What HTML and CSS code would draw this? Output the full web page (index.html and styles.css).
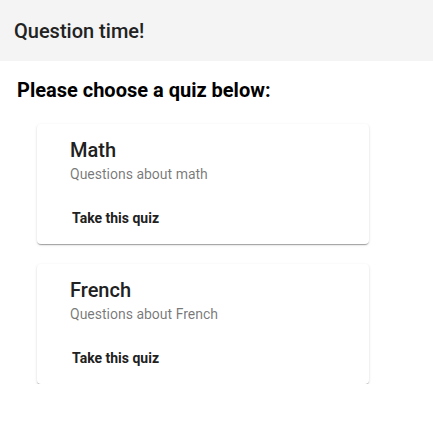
FILE: index.html
```html
<!DOCTYPE html>
<html>
<head>
<meta charset="utf-8">
<link rel="stylesheet" href="styles.css">
</head>
<body>
<header class="topbar">Question time!</header>
<h2 class="prompt">Please choose a quiz below:</h2>
<div class="list">
  <div class="card">
    <div class="card-title">Math</div>
    <div class="card-sub">Questions about math</div>
    <div class="card-action">Take this quiz</div>
  </div>
  <div class="card">
    <div class="card-title">French</div>
    <div class="card-sub">Questions about French</div>
    <div class="card-action">Take this quiz</div>
  </div>
</div>
</body>
</html>
```
FILE: styles.css
```css
body {
  margin: 0;
  font-family: Roboto, "Noto Sans", sans-serif;
  background: #fff;
  color: rgba(0,0,0,0.87);
}
.topbar {
  height: 61px;
  background: #f4f4f4;
  display: flex;
  align-items: center;
  padding-left: 14px;
  font-size: 20px;
  font-weight: 500;
  color: #222;
}
.prompt {
  margin: 17px 0 0 17px;
  font-size: 20px;
  line-height: 24px;
  font-weight: 700;
  color: #000;
}
.list {
  display: flex;
  flex-direction: column;
  gap: 20px;
  margin: 22px 0 0 37px;
  width: 332px;
}
.card {
  background: #fff;
  border-radius: 4px;
  box-shadow: 0 2px 1px -1px rgba(0,0,0,0.2), 0 1px 1px 0 rgba(0,0,0,0.14), 0 1px 3px 0 rgba(0,0,0,0.12);
  padding: 14px 0 16px 33px;
  display: flex;
  flex-direction: column;
}
.card-title {
  font-size: 20px;
  line-height: 24px;
  font-weight: 500;
  color: #212121;
}
.card-sub {
  margin-top: 2px;
  font-size: 14px;
  line-height: 20px;
  color: rgba(0,0,0,0.54);
}
.card-action {
  margin-top: 24px;
  margin-left: 2px;
  font-size: 14px;
  line-height: 20px;
  font-weight: 700;
  color: #212121;
}
```
